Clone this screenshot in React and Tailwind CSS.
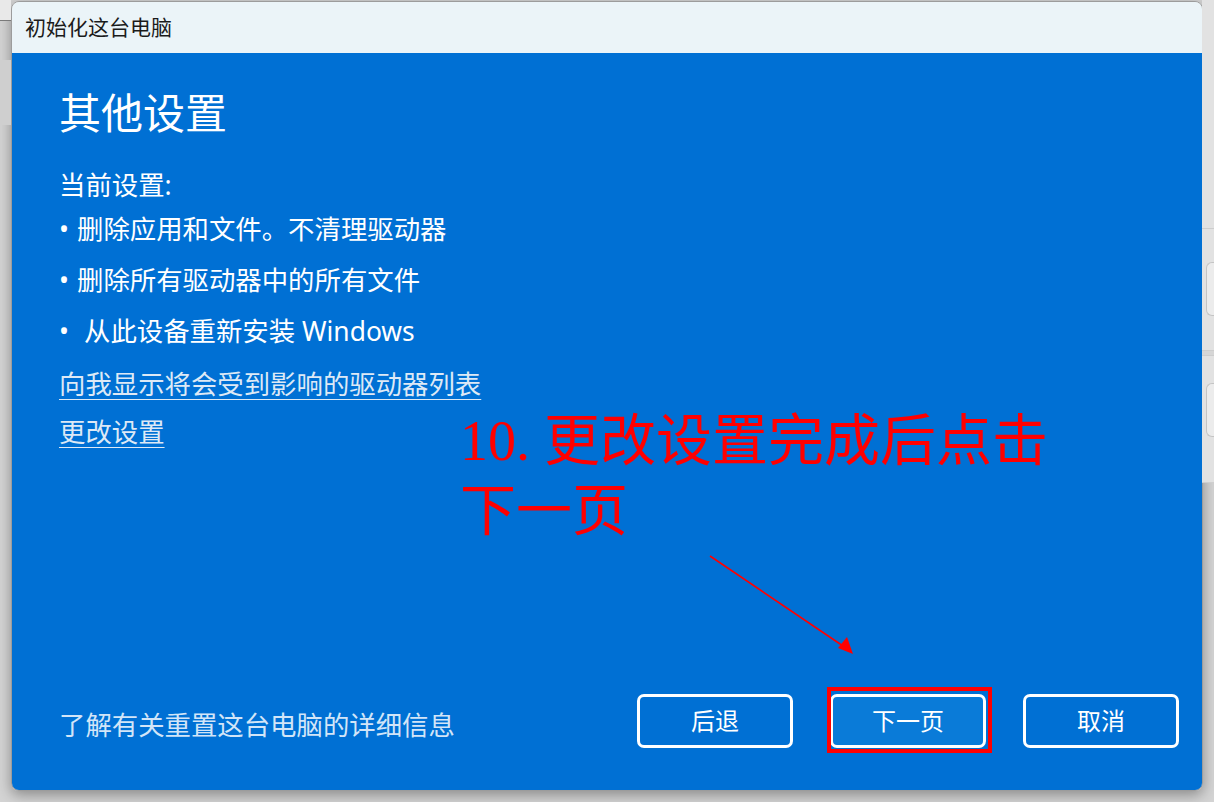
import React from 'react'

const cjk = { fontFamily: '"Noto Sans", "Noto Sans CJK SC", sans-serif' }

const bullets = [
  { text: '删除应用和文件。不清理驱动器', pad: 'w-[18px]' },
  { text: '删除所有驱动器中的所有文件', pad: 'w-[18px]' },
  { text: '从此设备重新安装 Windows', pad: 'w-[25px]' },
]

function DialogButton({ label, active }) {
  return (
    <button
      className={`w-[156px] h-[54px] rounded-[7px] border-[3px] border-white text-white text-[24px] leading-none ${
        active ? 'bg-[#0a7bd8]' : 'bg-[#0070d4]'
      }`}
    >
      {label}
    </button>
  )
}

export default function App() {
  return (
    <div className="relative w-[1214px] h-[802px] overflow-hidden bg-[#d4d4d4]" style={cjk}>
      {/* desktop behind the dialog */}
      <div className="absolute left-0 top-0 w-[11px] h-[21px] bg-[#e9e9e9] border-b border-[#7a7a7a]" />
      <div className="absolute left-0 top-[60px] w-[11px] h-[65px] bg-[#cfcfcf]" />
      <div className="absolute right-0 top-0 w-[12px] h-[483px] bg-[#e2e2e2] border-b border-[#cfcfcf]">
        <div className="mt-[228px] border-t border-[#cdcdcd]" />
        <div className="mt-[33px] ml-[4px] h-[54px] rounded-l-[6px] border border-r-0 border-[#c4c4c4] bg-[#ececec]" />
        <div className="mt-[34px] h-[6px] border-y border-[#cdcdcd] bg-[#d6d6d6]" />
        <div className="mt-[27px] ml-[4px] h-[54px] rounded-l-[6px] border border-r-0 border-[#c4c4c4] bg-[#ececec]" />
      </div>

      {/* dialog window */}
      <div className="ml-[11px] mt-[1px] w-[1192px] h-[790px] flex flex-col rounded-[8px] overflow-hidden border border-[#9c9c9c] shadow-[0_4px_14px_rgba(0,0,0,0.35)]">
        <div className="h-[51px] shrink-0 flex items-center pl-[13px] bg-[#ebf4f8] text-[#1b1b1b] text-[21px]">
          初始化这台电脑
        </div>

        <div className="flex-1 flex flex-col bg-[#0070d4] pl-[47px] pr-[23px] text-white">
          <h1 className="mt-[32px] text-[42px] leading-[56px]">其他设置</h1>

          <p className="mt-[25px] text-[26.4px] leading-[38px]">当前设置:</p>
          <ul className="text-[26.4px] leading-[51px]">
            {bullets.map((b) => (
              <li key={b.text} className="flex">
                <span className={`${b.pad} shrink-0`}>•</span>
                <span>{b.text}</span>
              </li>
            ))}
          </ul>

          <div className="mt-[3px] flex flex-col items-start text-[26.4px] leading-[48px] text-[#dde9f6]">
            <a href="#" className="underline underline-offset-[5px] decoration-1">向我显示将会受到影响的驱动器列表</a>
            <a href="#" className="underline underline-offset-[5px] decoration-1">更改设置</a>
          </div>

          <div className="mt-auto pb-[42px] flex items-end justify-between">
            <span className="mb-[3px] text-[26.4px] leading-[40px] text-[#d2e5f8]">了解有关重置这台电脑的详细信息</span>
            <div className="flex gap-[37px]">
              <DialogButton label="后退" />
              <div className="relative">
                <DialogButton label="下一页" active />
                <div className="absolute -left-[3px] -right-[6px] -top-[7px] -bottom-[5px] border-[4px] border-[#ff0000]" />
              </div>
              <DialogButton label="取消" />
            </div>
          </div>
        </div>
      </div>

      {/* annotation */}
      <div
        className="absolute left-[460px] top-[406px] text-[56px] leading-[70px] text-[#ff0000]"
        style={{ fontFamily: '"Liberation Serif", "Noto Sans CJK SC", serif' }}
      >
        <div>10. 更改设置完成后点击</div>
        <div>下一页</div>
      </div>
      <svg className="absolute left-0 top-0 pointer-events-none" width="1214" height="802" viewBox="0 0 1214 802">
        <line x1="710" y1="556" x2="846" y2="648" stroke="#ff0000" strokeWidth="1.6" />
        <polygon points="853,654 838,648 847,637" fill="#ff0000" />
      </svg>
    </div>
  )
}
